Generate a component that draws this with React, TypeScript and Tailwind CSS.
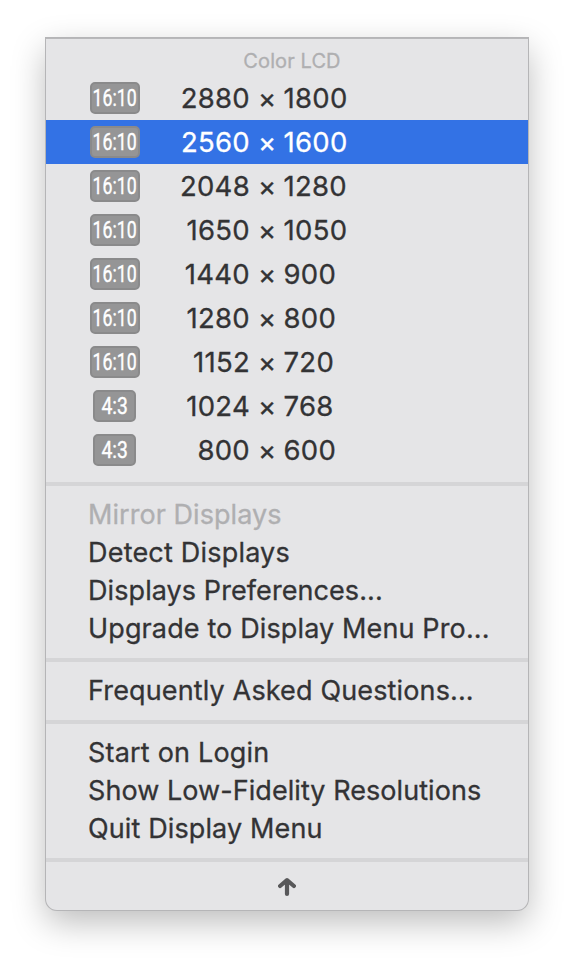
type Mode = { ratio: string; w: string; h: string; selected?: boolean };

const modes: Mode[] = [
  { ratio: '16:10', w: '2880', h: '1800' },
  { ratio: '16:10', w: '2560', h: '1600', selected: true },
  { ratio: '16:10', w: '2048', h: '1280' },
  { ratio: '16:10', w: '1650', h: '1050' },
  { ratio: '16:10', w: '1440', h: '900' },
  { ratio: '16:10', w: '1280', h: '800' },
  { ratio: '16:10', w: '1152', h: '720' },
  { ratio: '4:3', w: '1024', h: '768' },
  { ratio: '4:3', w: '800', h: '600' },
];

function Badge({ ratio }: { ratio: string }) {
  const wide = ratio === '16:10';
  return (
    <span
      className={`flex h-8 shrink-0 items-center justify-center rounded-[5px] border-2 border-[#8a8a8b] bg-[#959596] font-['Roboto',sans-serif] text-[23px] leading-none text-white [-webkit-text-stroke:0.4px] ${wide ? 'w-[50px]' : 'mr-px w-[43px]'}`}
    >
      <span className={`inline-block whitespace-nowrap ${wide ? 'scale-x-[0.77]' : 'scale-x-[0.84]'}`}>{ratio}</span>
    </span>
  );
}

function ModeRow({ mode }: { mode: Mode }) {
  return (
    <div className={`flex h-11 items-center pl-11 text-[27.5px] tracking-[0.3px] ${mode.selected ? 'bg-[#3372e5] text-white' : ''}`}>
      <div className="flex w-[50px] justify-center tracking-normal">
        <Badge ratio={mode.ratio} />
      </div>
      <span className="w-[110px] pt-[2px] text-right">{mode.w}</span>
      <span className="w-[33.5px] pt-[2px] pl-px text-center">×</span>
      <span className="pt-[2px]">{mode.h}</span>
    </div>
  );
}

function Separator() {
  return <div className="my-[10px] h-1 bg-[#d5d5d7]" />;
}

function Item({ text, fit, disabled }: { text: string; fit: string; disabled?: boolean }) {
  return (
    <div className={`flex h-[38px] items-center whitespace-nowrap pb-[2px] pl-[42px] ${fit} ${disabled ? 'text-[#afafb1]' : ''}`}>
      {text}
    </div>
  );
}

export default function App() {
  return (
    <div className="flex h-[964px] w-[574px] flex-col items-center bg-white pt-[38px] font-['Inter',sans-serif] text-[27px] leading-none text-[#333335] [-webkit-text-stroke:0.3px]">
      <div className="h-[872px] w-[482px] rounded-b-[11px] border-t border-[#b8b8ba] bg-[#e5e5e7] shadow-[0_0_0_1px_#b5b5b7,0_12px_34px_rgba(0,0,0,0.27)]">
        <div className="flex h-[37px] items-center justify-center pt-1.5 pl-[10px] text-[20px] tracking-[0.1px] text-[#afafb1]">Color LCD</div>
        {modes.map((m) => (
          <ModeRow key={m.w} mode={m} />
        ))}
        <Separator />
        <Item text="Mirror Displays" fit="tracking-[0.05px]" disabled />
        <Item text="Detect Displays" fit="tracking-[0.2px]" />
        <Item text="Displays Preferences..." fit="tracking-[0.08px]" />
        <Item text="Upgrade to Display Menu Pro..." fit="tracking-[0.13px]" />
        <Separator />
        <Item text="Frequently Asked Questions..." fit="tracking-[0.14px]" />
        <Separator />
        <Item text="Start on Login" fit="tracking-[0.2px]" />
        <Item text="Show Low-Fidelity Resolutions" fit="tracking-[0.06px]" />
        <Item text="Quit Display Menu" fit="tracking-[0.12px]" />
        <Separator />
        <div className="flex h-[30px] items-center justify-center">
          <svg className="h-[18px] w-[18px]" viewBox="0 0 18 18" fill="none" stroke="#58585a" strokeWidth="4.2" strokeLinecap="round" strokeLinejoin="round">
            <path d="M9 15.9V3M2.1 8L9 2.2L15.9 8" />
          </svg>
        </div>
      </div>
    </div>
  );
}
